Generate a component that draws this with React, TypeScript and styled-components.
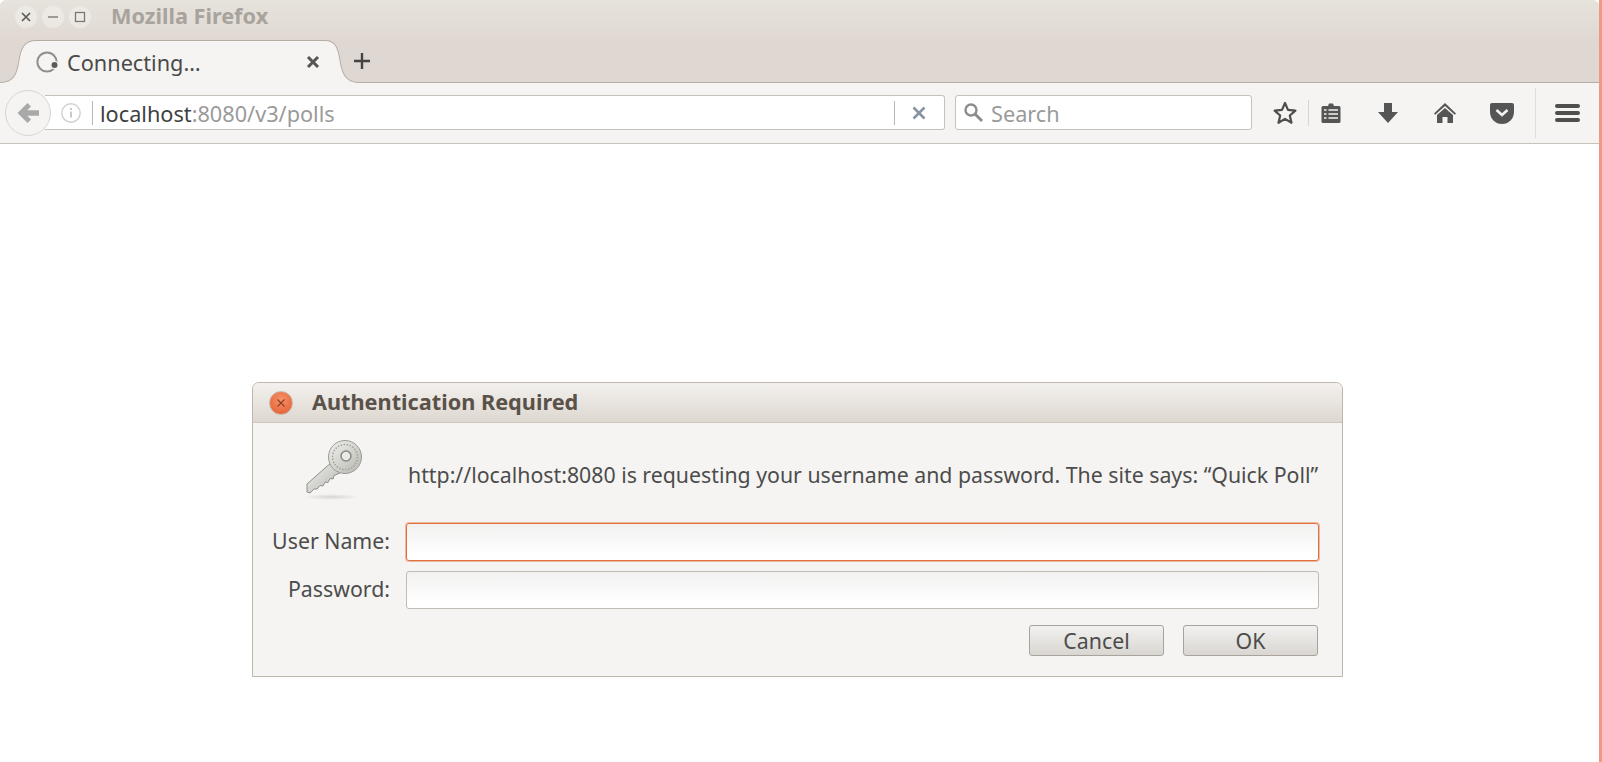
import React from 'react';
import styled, { createGlobalStyle } from 'styled-components';

const GlobalStyle = createGlobalStyle`
  html, body {
    margin: 0;
    padding: 0;
    height: 100%;
    background: #fff;
    overflow: hidden;
  }
  body {
    font-family: "Noto Sans", "Open Sans", sans-serif;
    color: #4c4c4c;
  }
  * {
    box-sizing: border-box;
  }
`;

const App = () => {
  return (
    <Screen>
      <GlobalStyle />
      <Browser>
        <Chrome>
          <TitleRow>
            <WindowButton>
              <svg width="12" height="12" viewBox="0 0 12 12">
                <path d="M2 2l8 8M10 2l-8 8" stroke="#5e5a55" strokeWidth="1.7" />
              </svg>
            </WindowButton>
            <WindowButton>
              <svg width="12" height="12" viewBox="0 0 12 12">
                <path d="M1 6h10" stroke="#7d7871" strokeWidth="1.4" />
              </svg>
            </WindowButton>
            <WindowButton>
              <svg width="12" height="12" viewBox="0 0 12 12">
                <rect x="1.5" y="1.5" width="9" height="9" fill="none" stroke="#7d7871" strokeWidth="1.3" />
              </svg>
            </WindowButton>
            <WindowTitle>Mozilla Firefox</WindowTitle>
          </TitleRow>
          <TabRow>
            <TabCurve width="36" height="43" viewBox="0 0 36 42" preserveAspectRatio="none">
              <path d="M0 41.5C14 41.5 17 33 19 20C21 7 25 .5 36 .5V42H0Z" fill="#f5f4f2" />
              <path d="M0 41.5C14 41.5 17 33 19 20C21 7 25 .5 36 .5" fill="none" stroke="#b5aca4" />
            </TabCurve>
            <Tab>
              <svg width="26" height="26" viewBox="0 0 26 26">
                <circle cx="11" cy="13" r="9.6" fill="none" stroke="#8f8f8f" strokeWidth="2" />
                <circle cx="18.5" cy="16" r="3.6" fill="#5a5a5a" stroke="#f5f4f2" strokeWidth="1.2" />
              </svg>
              <TabLabel>Connecting…</TabLabel>
              <TabClose width="14" height="14" viewBox="0 0 14 14">
                <path d="M2 2l10 10M12 2L2 12" stroke="#555" strokeWidth="3" />
              </TabClose>
            </Tab>
            <TabCurve width="34" height="43" viewBox="0 0 34 42" preserveAspectRatio="none">
              <path d="M0 .5C10 .5 13 7 15 20C17 33 21 41.5 34 41.5V42H0Z" fill="#f5f4f2" />
              <path d="M0 .5C10 .5 13 7 15 20C17 33 21 41.5 34 41.5" fill="none" stroke="#b5aca4" />
            </TabCurve>
            <NewTab width="20" height="20" viewBox="0 0 20 20">
              <path d="M10 2v16M2 10h16" stroke="#444" strokeWidth="2.4" />
            </NewTab>
          </TabRow>
        </Chrome>
        <NavBar>
          <BackButton>
            <svg width="24" height="24" viewBox="0 0 24 24">
              <path d="M11.500 2L1.500 12l10 10 3.500-3.500-3.700-3.700H23V9.200H11.300L15 5.500z" fill="#a9a9a9" />
            </svg>
          </BackButton>
          <UrlBar>
            <svg width="22" height="22" viewBox="0 0 22 22">
              <circle cx="11" cy="11" r="9.2" fill="none" stroke="#d0d0d0" strokeWidth="1.4" />
              <path d="M11 9.500v6M11 6v2" stroke="#c4c4c4" strokeWidth="1.8" />
            </svg>
            <UrlDivider />
            <UrlText>
              localhost<UrlRest>:8080/v3/polls</UrlRest>
            </UrlText>
            <UrlDivider />
            <UrlStop width="14" height="14" viewBox="0 0 14 14">
              <path d="M1.500 1.500l11 11M12.500 1.500l-11 11" stroke="#8795a3" strokeWidth="2.600" />
            </UrlStop>
          </UrlBar>
          <SearchBar>
            <svg width="22" height="22" viewBox="0 0 22 22">
              <circle cx="8" cy="8" r="5.500" fill="none" stroke="#8d8d8d" strokeWidth="2.400" />
              <path d="M12 12l7 7" stroke="#8d8d8d" strokeWidth="3" />
            </svg>
            <SearchText>Search</SearchText>
          </SearchBar>
          <StarSlot>
            <svg width="26" height="26" viewBox="0 0 26 26">
              <path
                d="M13 3l3 6.900 7.400.7-5.600 4.900 1.700 7.300L13 18.900l-6.500 3.900 1.700-7.300-5.600-4.900 7.400-.7z"
                fill="none"
                stroke="#4d4d4d"
                strokeWidth="2.200"
                strokeLinejoin="round"
              />
            </svg>
          </StarSlot>
          <ToolDivider />
          <ToolGroup>
            <ToolSlot>
              <svg width="24" height="24" viewBox="0 0 24 24">
                <path
                  d="M4 5h5l1-2.500h4L15 5h5a1.500 1.500 0 0 1 1.500 1.500v14A1.500 1.500 0 0 1 20 22H4a1.500 1.500 0 0 1-1.500-1.500v-14A1.500 1.500 0 0 1 4 5z"
                  fill="#555"
                />
                <path d="M5 9h2.500M5 13h2.500M5 17h2.500M9.500 9H19M9.500 13H19M9.500 17H19" stroke="#f5f4f2" strokeWidth="1.400" />
              </svg>
            </ToolSlot>
            <ToolSlot>
              <svg width="24" height="24" viewBox="0 0 24 24">
                <path d="M8 2h8v9h6L12 22 2 11h6z" fill="#555" />
              </svg>
            </ToolSlot>
            <ToolSlot>
              <svg width="24" height="24" viewBox="0 0 24 24">
                <path d="M12 2L1 12.500l1.200 1.300L12 5l9.800 8.800 1.200-1.300z" fill="#555" />
                <path d="M12 7l-8 7v8h5.500v-6h5v6H20v-8z" fill="#555" />
              </svg>
            </ToolSlot>
            <ToolSlot>
              <svg width="26" height="24" viewBox="0 0 26 24">
                <path d="M3 2h20a2 2 0 0 1 2 2v7a12 12 0 0 1-24 0V4a2 2 0 0 1 2-2z" fill="#555" />
                <path d="M7.500 9l5.500 5 5.500-5" fill="none" stroke="#f5f4f2" strokeWidth="2.600" />
              </svg>
            </ToolSlot>
          </ToolGroup>
          <MenuDivider />
          <MenuSlot>
            <MenuLine />
            <MenuLine />
            <MenuLine />
          </MenuSlot>
        </NavBar>
        <Page>
          <Dialog>
            <DialogHeader>
              <DialogClose>
                <svg width="10" height="10" viewBox="0 0 10 10">
                  <path d="M1.500 1.500l7 7M8.500 1.500l-7 7" stroke="#8c3f22" strokeWidth="1.200" />
                </svg>
              </DialogClose>
              <DialogTitle>Authentication Required</DialogTitle>
            </DialogHeader>
            <DialogBody>
              <KeyCell>
                <svg width="62" height="64" viewBox="0 0 62 64">
                  <defs>
                    <linearGradient id="keyFill" x1="0" y1="0" x2="1" y2="1">
                      <stop offset="0" stopColor="#f0f0ed" />
                      <stop offset="1" stopColor="#b8b8b2" />
                    </linearGradient>
                    <radialGradient id="keyShadow">
                      <stop offset="0" stopColor="#000" stopOpacity="0.13" />
                      <stop offset="1" stopColor="#000" stopOpacity="0" />
                    </radialGradient>
                  </defs>
                  <ellipse cx="28" cy="60" rx="28" ry="3" fill="url(#keyShadow)" />
                  <path
                    d="M4 47L30 24L37 36L31 38.500L30 42L27 41.500L25 45.500L22 45L20 49L17 48.500L14 52L11 52L7 56L4 55Z"
                    fill="url(#keyFill)"
                    stroke="#8f8f8a"
                    strokeLinejoin="round"
                  />
                  <circle cx="42" cy="20" r="16.500" fill="url(#keyFill)" stroke="#9b9b96" />
                  <circle cx="42" cy="20" r="12.500" fill="none" stroke="#a3a39e" strokeWidth="1.500" strokeDasharray="1.500 1.500" />
                  <circle cx="43" cy="19" r="5" fill="#e9e9e6" stroke="#8a8a85" strokeWidth="1.500" />
                </svg>
              </KeyCell>
              <Message>http://localhost:8080 is requesting your username and password. The site says: “Quick Poll”</Message>
              <FieldLabel>User Name:</FieldLabel>
              <FieldInput $focused />
              <FieldLabel>Password:</FieldLabel>
              <FieldInput type="password" />
              <ButtonRow>
                <DialogButton>Cancel</DialogButton>
                <DialogButton>OK</DialogButton>
              </ButtonRow>
            </DialogBody>
          </Dialog>
        </Page>
      </Browser>
      <DesktopEdge />
    </Screen>
  );
};

const Screen = styled.div`
  display: flex;
  width: 1602px;
  height: 762px;
  overflow: hidden;
`;

const Browser = styled.div`
  flex: 1;
  min-width: 0;
  display: flex;
  flex-direction: column;
`;

const DesktopEdge = styled.div`
  width: 3px;
  background: #ef9a80;
`;

const Chrome = styled.div`
  height: 83px;
  flex-shrink: 0;
  background: linear-gradient(#e6e3dc, #dfd7d1 55%);
  border-radius: 6px 6px 0 0;
  box-shadow: inset 0 -1px 0 #b5aca4;
`;

const TitleRow = styled.div`
  height: 40px;
  padding: 6px 0 0 15px;
  display: flex;
  align-items: flex-start;
  gap: 5px;
`;

const WindowButton = styled.div`
  width: 22px;
  height: 22px;
  border-radius: 50%;
  background: rgba(255, 255, 255, 0.32);
  display: flex;
  align-items: center;
  justify-content: center;
`;

const WindowTitle = styled.div`
  margin-left: 15px;
  font-size: 21.7px;
  font-weight: 700;
  line-height: 20px;
  color: #a8a39c;
`;

const TabRow = styled.div`
  height: 43px;
  display: flex;
  align-items: flex-start;
`;

const TabCurve = styled.svg`
  display: block;
  flex-shrink: 0;
`;

const Tab = styled.div`
  width: 289px;
  height: 43px;
  background: #f5f4f2;
  border-top: 1px solid #b5aca4;
  display: flex;
  align-items: center;
`;

const TabLabel = styled.div`
  margin-left: 5px;
  font-size: 21.7px;
  color: #4a4a4a;
  flex: 1;
`;

const TabClose = styled.svg`
  margin-right: 5px;
`;

const NewTab = styled.svg`
  margin: 11px 0 0 -7px;
`;

const NavBar = styled.div`
  height: 61px;
  flex-shrink: 0;
  background: #f5f4f2;
  border-bottom: 1px solid #c9c2bb;
  display: flex;
  align-items: center;
  padding: 0 0 1px 5px;
`;

const BackButton = styled.div`
  width: 46px;
  height: 46px;
  border-radius: 50%;
  background: #f5f4f2;
  border: 1px solid #d8d5d0;
  display: flex;
  align-items: center;
  justify-content: center;
  margin-right: -6px;
  position: relative;
  z-index: 1;
  flex-shrink: 0;
`;

const UrlBar = styled.div`
  width: 900px;
  height: 35px;
  background: #fff;
  border: 1px solid #c8c1b9;
  border-left: none;
  border-radius: 0 3px 3px 0;
  display: flex;
  align-items: center;
  padding-left: 15px;
  flex-shrink: 0;
`;

const UrlDivider = styled.div`
  width: 1px;
  height: 24px;
  background: #bcb6af;
  margin-left: 10px;
  flex-shrink: 0;
`;

const UrlText = styled.div`
  flex: 1;
  margin: 2px 0 0 7px;
  font-size: 21.7px;
  color: #3f3f3f;
`;

const UrlRest = styled.span`
  color: #9a9a9a;
`;

const UrlStop = styled.svg`
  margin: 0 18px 0 17px;
  flex-shrink: 0;
`;

const SearchBar = styled.div`
  width: 297px;
  height: 35px;
  margin-left: 10px;
  background: #fff;
  border: 1px solid #c8c1b9;
  border-radius: 3px;
  display: flex;
  align-items: center;
  padding-left: 7px;
  flex-shrink: 0;
`;

const SearchText = styled.div`
  margin: 2px 0 0 6px;
  font-size: 21.7px;
  color: #9a9a9a;
`;

const StarSlot = styled.div`
  width: 56px;
  display: flex;
  justify-content: flex-end;
  padding-right: 10px;
  flex-shrink: 0;
`;

const ToolDivider = styled.div`
  width: 1px;
  height: 26px;
  background: #d8d5d0;
  flex-shrink: 0;
`;

const ToolGroup = styled.div`
  display: flex;
  margin-left: -7px;
  flex-shrink: 0;
`;

const ToolSlot = styled.div`
  width: 57px;
  display: flex;
  justify-content: center;
`;

const MenuDivider = styled.div`
  width: 1px;
  height: 50px;
  background: #e0ddd9;
  margin-left: 5px;
  flex-shrink: 0;
`;

const MenuSlot = styled.div`
  flex: 1;
  display: flex;
  flex-direction: column;
  align-items: center;
  gap: 3px;
`;

const MenuLine = styled.div`
  width: 25px;
  height: 4px;
  border-radius: 2px;
  background: #4f4f4f;
`;

const Page = styled.div`
  flex: 1;
  background: #fff;
  padding: 238px 0 0 252px;
`;

const Dialog = styled.div`
  width: 1091px;
  height: 295px;
  background: #f5f4f2;
  border: 1px solid #bdb6ad;
  border-radius: 7px 7px 0 0;
  overflow: hidden;
`;

const DialogHeader = styled.div`
  height: 40px;
  background: linear-gradient(#f3f1ee, #ded7d0);
  border-bottom: 1px solid #cfc8c0;
  display: flex;
  align-items: center;
  padding-left: 16px;
`;

const DialogClose = styled.div`
  width: 24px;
  height: 24px;
  border-radius: 50%;
  background: radial-gradient(circle at 50% 35%, #f6926a, #e25a2b);
  border: 1px solid #c9b8ac;
  display: flex;
  align-items: center;
  justify-content: center;
`;

const DialogTitle = styled.div`
  margin: 0 0 2px 19px;
  font-size: 21.7px;
  font-weight: 700;
  color: #5a5249;
`;

const DialogBody = styled.div`
  display: grid;
  grid-template-columns: 153px 913px;
  grid-template-rows: 100px 38px 48px auto;
`;

const KeyCell = styled.div`
  padding: 14px 0 0 50px;
`;

const Message = styled.div`
  margin: 38px 0 0 2px;
  font-size: 21.3px;
  line-height: 28px;
  white-space: nowrap;
  color: #4c4c4c;
`;

const FieldLabel = styled.label`
  font-size: 21.3px;
  line-height: 36px;
  text-align: right;
  padding-right: 16px;
  color: #4c4c4c;
  &:nth-of-type(2) {
    margin-top: 10px;
  }
`;

const FieldInput = styled.input<{ $focused?: boolean }>`
  display: block;
  width: 100%;
  height: 38px;
  border-radius: 3px;
  outline: none;
  padding: 0 8px;
  border: 1px solid ${(props) => (props.$focused ? '#e2703f' : '#c0bbb3')};
  box-shadow: ${(props) => (props.$focused ? '0 0 0 1px rgba(226,112,63,0.45)' : 'none')};
  background: linear-gradient(#f2f1f0, #ffffff 85%);
  &:nth-of-type(2) {
    margin-top: 10px;
  }
`;

const ButtonRow = styled.div`
  grid-column: 1 / 3;
  display: flex;
  justify-content: flex-end;
  gap: 19px;
  padding: 16px 1px 0 0;
`;

const DialogButton = styled.button`
  width: 135px;
  height: 31px;
  padding: 0;
  border: 1px solid #a8a39c;
  border-radius: 3px;
  background: linear-gradient(#f2f1ef, #d9d6d2);
  font-family: inherit;
  font-size: 21.3px;
  line-height: 28px;
  color: #4c4c4c;
`;

export default App;
